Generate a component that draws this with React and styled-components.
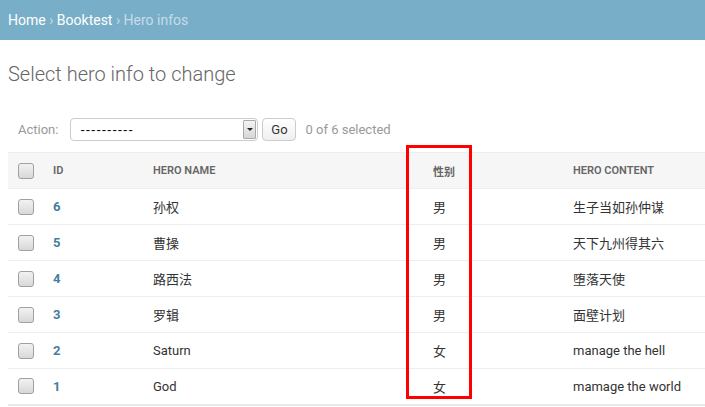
import React from 'react';
import styled, {createGlobalStyle} from 'styled-components';

const GlobalStyle = createGlobalStyle`
    body {
        margin: 0;
        background: #fff;
        font-family: Roboto, "Liberation Sans", "Noto Sans CJK SC", sans-serif;
        font-size: 13px;
        color: #333;
    }
`;

const Page = styled.div`
    position: relative;
    width: 705px;
    height: 407px;
    overflow: hidden;
`;

const Breadcrumbs = styled.div`
    height: 40px;
    background: #79aec8;
    padding: 0 8px;
    display: flex;
    align-items: center;
    font-size: 14px;
    font-weight: 400;
    color: #c4dce8;
    white-space: pre;
`;

const Crumb = styled.a`
    color: #fff;
    text-decoration: none;
`;

const Content = styled.div`
    padding: 20px 0 0 8px;
`;

const Title = styled.h1`
    margin: 0;
    font-size: 20px;
    line-height: 28px;
    font-weight: 300;
    color: #666;
`;

const Actions = styled.div`
    margin: 30px 0 11px;
    padding-left: 10px;
    height: 23px;
    display: flex;
    align-items: center;
    color: #999;
`;

const Label = styled.span`
    margin-right: 12px;
`;

const Select = styled.div`
    box-sizing: border-box;
    width: 188px;
    height: 23px;
    border: 1px solid #ccc;
    border-radius: 4px;
    display: flex;
    align-items: center;
    padding-left: 9px;
    color: #000;
    font-family: "Liberation Sans", sans-serif;
    font-size: 13px;
    background: #fff;
`;

const SelectText = styled.span`
    flex: 1;
    letter-spacing: 1px;
`;

const SelectArrow = styled.span`
    width: 13px;
    height: 19px;
    margin-right: 1px;
    border: 1px solid #aaa;
    border-radius: 1px;
    box-sizing: border-box;
    background: linear-gradient(#f4f4f4, #d6d6d6);
    display: flex;
    align-items: center;
    justify-content: center;
    &::after {
        content: '';
        border-left: 3px solid transparent;
        border-right: 3px solid transparent;
        border-top: 3px solid #222;
    }
`;

const GoButton = styled.button`
    box-sizing: border-box;
    margin-left: 4px;
    height: 23px;
    width: 34px;
    border: 1px solid #ccc;
    border-radius: 4px;
    background: linear-gradient(#fff, #efefef);
    color: #333;
    font-family: Roboto, sans-serif;
    font-size: 13px;
    padding: 0;
`;

const Counter = styled.span`
    margin-left: 9px;
    color: #999;
`;

const Table = styled.table`
    width: 697px;
    border-collapse: collapse;
    table-layout: fixed;
`;

const Th = styled.th`
    height: 36px;
    box-sizing: border-box;
    padding: 0 ${(p) => (p.$check ? '10px' : '8px')};
    background: #f6f6f6;
    border-top: 1px solid #eee;
    border-bottom: 1px solid #eee;
    text-align: left;
    font-size: 11px;
    font-weight: 600;
    color: #666;
    text-transform: uppercase;
    vertical-align: middle;
`;

const Row = styled.tr`
    &:last-child td {
        border-bottom: 2px solid #e8e8e8;
    }
`;

const Td = styled.td`
    height: 36px;
    box-sizing: border-box;
    padding: 0 ${(p) => (p.$check ? '10px' : '8px')};
    border-bottom: 1px solid #eee;
    vertical-align: middle;
    color: #333;
    font-size: 13px;
`;

const IdLink = styled.a`
    color: #447e9b;
    font-weight: 700;
    text-decoration: none;
`;

const Check = styled.span`
    display: block;
    box-sizing: border-box;
    width: 16px;
    height: 16px;
    border: 1px solid #a0a0a0;
    border-radius: 3px;
    background: linear-gradient(#f2f2f2, #d8d8d8);
`;

const Highlight = styled.div`
    position: absolute;
    left: 406px;
    top: 145px;
    width: 66px;
    height: 254px;
    box-sizing: border-box;
    border: 3px solid #f00;
    pointer-events: none;
`;

const heroes = [
    {id: 6, name: '孙权', gender: '男', content: '生子当如孙仲谋'},
    {id: 5, name: '曹操', gender: '男', content: '天下九州得其六'},
    {id: 4, name: '路西法', gender: '男', content: '堕落天使'},
    {id: 3, name: '罗辑', gender: '男', content: '面壁计划'},
    {id: 2, name: 'Saturn', gender: '女', content: 'manage the hell'},
    {id: 1, name: 'God', gender: '女', content: 'mamage the world'},
];

export default function App() {
    return (
        <Page>
            <GlobalStyle />
            <Breadcrumbs>
                <Crumb href="#">Home</Crumb>
                {' › '}
                <Crumb href="#">Booktest</Crumb>
                {' › Hero infos'}
            </Breadcrumbs>
            <Content>
                <Title>Select hero info to change</Title>
                <Actions>
                    <Label>Action:</Label>
                    <Select>
                        <SelectText>----------</SelectText>
                        <SelectArrow />
                    </Select>
                    <GoButton>Go</GoButton>
                    <Counter>0 of 6 selected</Counter>
                </Actions>
                <Table>
                    <colgroup>
                        <col style={{width: 37}} />
                        <col style={{width: 100}} />
                        <col style={{width: 280}} />
                        <col style={{width: 140}} />
                        <col />
                    </colgroup>
                    <thead>
                        <tr>
                            <Th $check><Check /></Th>
                            <Th>ID</Th>
                            <Th>Hero name</Th>
                            <Th>性别</Th>
                            <Th>Hero content</Th>
                        </tr>
                    </thead>
                    <tbody>
                        {heroes.map((hero) => (
                            <Row key={hero.id}>
                                <Td $check><Check /></Td>
                                <Td><IdLink href="#">{hero.id}</IdLink></Td>
                                <Td>{hero.name}</Td>
                                <Td>{hero.gender}</Td>
                                <Td>{hero.content}</Td>
                            </Row>
                        ))}
                    </tbody>
                </Table>
            </Content>
            <Highlight />
        </Page>
    );
}
